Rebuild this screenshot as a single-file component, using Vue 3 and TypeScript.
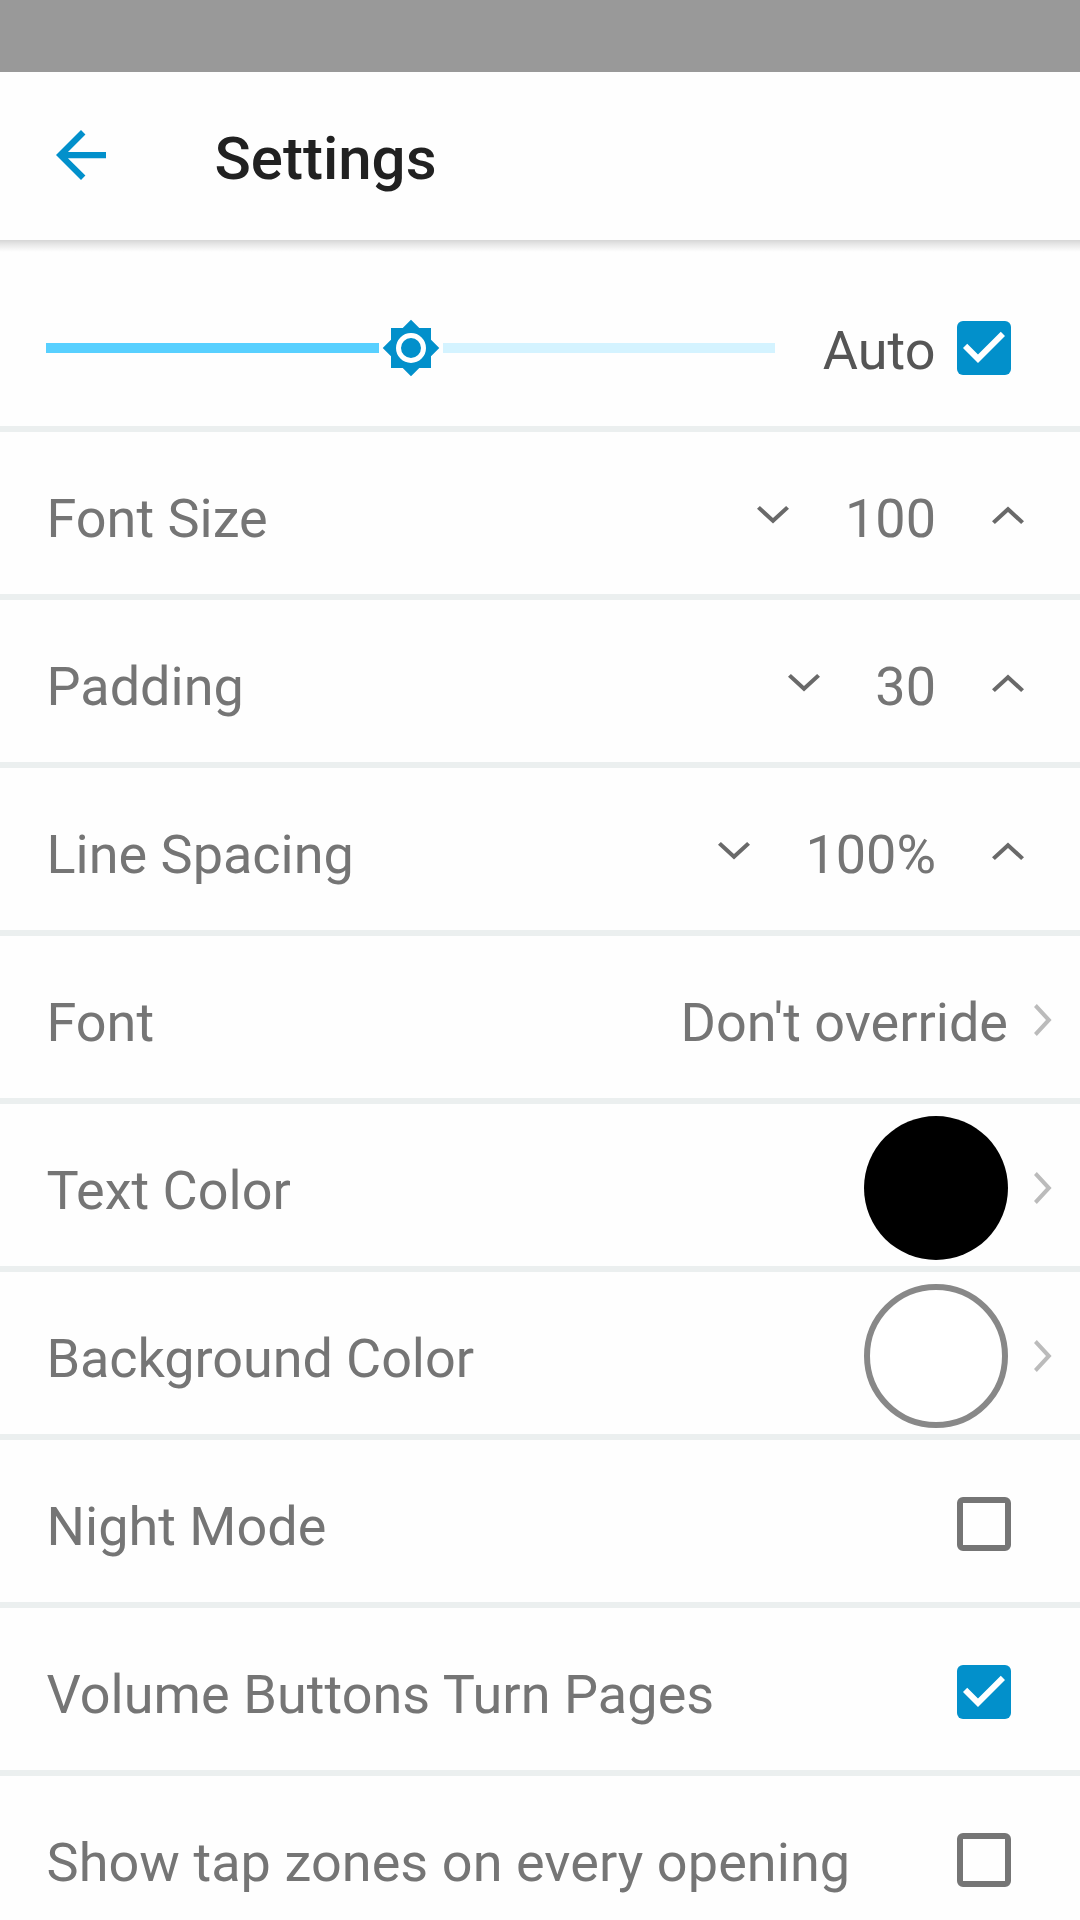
<script setup lang="ts">
import { ref } from 'vue'

type Kind = 'stepper' | 'link' | 'color' | 'check'

interface Row {
  label: string
  kind: Kind
  value?: string
  color?: string
  outlined?: boolean
  checked?: boolean
  tracking?: number
}

const autoBrightness = ref(true)

const rows = ref<Row[]>([
  { label: 'Font Size', kind: 'stepper', value: '100' },
  { label: 'Padding', kind: 'stepper', value: '30' },
  { label: 'Line Spacing', kind: 'stepper', value: '100%' },
  { label: 'Font', kind: 'link', value: "Don't override" },
  { label: 'Text Color', kind: 'color', color: '#000000' },
  { label: 'Background Color', kind: 'color', color: '#ffffff', outlined: true, tracking: -0.08 },
  { label: 'Night Mode', kind: 'check', checked: false },
  { label: 'Volume Buttons Turn Pages', kind: 'check', checked: true, tracking: 0.06 },
  { label: 'Show tap zones on every opening', kind: 'check', checked: false, tracking: 0.07 },
])
</script>

<template>
  <div class="screen">
    <div class="status-bar"></div>
    <header class="app-bar">
      <svg class="back" viewBox="4 4 16 16">
        <path d="M20 11H7.83l5.59-5.59L12 4l-8 8 8 8 1.41-1.41L7.83 13H20v-2z" />
      </svg>
      <h1 class="title">Settings</h1>
    </header>

    <main class="list">
      <section class="brightness">
        <div class="slider">
          <div class="track active"></div>
          <svg class="thumb" viewBox="0 0 24 24">
            <path
              fill="#0290cb"
              d="M20 15.31L23.31 12 20 8.69V4h-4.69L12 .69 8.69 4H4v4.69L.69 12 4 15.31V20h4.69L12 23.31 15.31 20H20v-4.69z"
            />
            <circle cx="12" cy="12" r="5" fill="none" stroke="#fff" stroke-width="2" />
          </svg>
          <div class="track rest"></div>
        </div>
        <span class="text auto">Auto</span>
        <span class="box" :class="{ checked: autoBrightness }" @click="autoBrightness = !autoBrightness">
          <svg v-if="autoBrightness" viewBox="3 3 18 18">
            <path d="M10 17l-5-5 1.41-1.41L10 14.17l7.59-7.59L19 8l-9 9z" />
          </svg>
        </span>
      </section>

      <section v-for="row in rows" :key="row.label" class="row" :class="row.kind">
        <span class="text label" :style="{ letterSpacing: (row.tracking ?? 0) + 'px' }">{{ row.label }}</span>

        <template v-if="row.kind === 'stepper'">
          <svg class="step" viewBox="0 0 32 18">
            <path d="M0 2.8L2.9 0 16 12 29.1 0 32 2.8 16 17.6z" />
          </svg>
          <span class="text value">{{ row.value }}</span>
          <svg class="step" viewBox="0 0 32 18">
            <path d="M0 15.2L2.9 18 16 6 29.1 18 32 15.2 16 .4z" />
          </svg>
        </template>

        <template v-else-if="row.kind === 'check'">
          <span class="box" :class="{ checked: row.checked }" @click="row.checked = !row.checked">
            <svg v-if="row.checked" viewBox="3 3 18 18">
              <path d="M10 17l-5-5 1.41-1.41L10 14.17l7.59-7.59L19 8l-9 9z" />
            </svg>
          </span>
        </template>

        <template v-else>
          <span v-if="row.kind === 'link'" class="text">{{ row.value }}</span>
          <span v-else class="swatch" :class="{ outlined: row.outlined }" :style="{ backgroundColor: row.color }"></span>
          <svg class="more" viewBox="0 0 18 32">
            <path d="M2.8 0L0 2.9 12 16 0 29.1 2.8 32 17.6 16z" />
          </svg>
        </template>
      </section>
    </main>
  </div>
</template>

<style>
body {
  margin: 0;
  overflow: hidden;
}
</style>

<style scoped>
.screen {
  width: 1080px;
  height: 1920px;
  overflow: hidden;
  background: #fefefe;
  font-family: Roboto, sans-serif;
}
.status-bar {
  height: 72px;
  background: #999;
}
.app-bar {
  height: 168px;
  box-sizing: border-box;
  padding-left: 56px;
  display: flex;
  align-items: center;
}
.back {
  width: 50px;
  height: 50px;
  margin-bottom: 2px;
  fill: #0290cb;
}
.title {
  margin: 0 0 0 108.5px;
  padding-top: 5px;
  font-size: 60px;
  line-height: 70px;
  font-weight: 500;
  color: #212121;
}
.list {
  background: linear-gradient(#d6d6d6, #e6e6e6 4px, #f6f6f6 9px, #fefefe 12px) no-repeat top / 100% 12px;
}
.brightness,
.row {
  box-sizing: border-box;
  display: flex;
  align-items: center;
  background: linear-gradient(#ebefef, #ebefef) no-repeat bottom / 100% 6px;
}
.brightness {
  height: 192px;
  padding: 24px 69px 0 46px;
}
.row {
  height: 168px;
  padding-left: 46.5px;
}
.stepper {
  padding-right: 56px;
}
.link,
.color {
  padding-right: 28px;
}
.check {
  padding-right: 69px;
}
.text {
  padding-top: 5px;
  font-size: 54px;
  line-height: 64px;
  color: #757575;
  white-space: nowrap;
}
.label {
  margin-right: auto;
}
.slider {
  width: 728.5px;
  display: flex;
  align-items: center;
}
.track {
  height: 10px;
}
.active {
  width: 333px;
  background: #58d0ff;
}
.rest {
  flex: 1;
  background: #d4f3ff;
}
.thumb {
  width: 60px;
  height: 60px;
  margin: 0 2px;
}
.auto {
  margin-left: auto;
  margin-right: 21.5px;
  color: #555;
}
.box {
  width: 54px;
  height: 54px;
  box-sizing: border-box;
  border: 6px solid #757575;
  border-radius: 6px;
}
.box.checked {
  border: 0;
  background: #0290cb;
}
.box svg {
  display: block;
  width: 54px;
  height: 54px;
  fill: #fff;
}
.step {
  width: 32px;
  height: 18px;
  margin-top: -2px;
  fill: #696969;
}
.value {
  margin: 0 56px 0 55.5px;
}
.swatch {
  width: 144px;
  height: 144px;
  box-sizing: border-box;
  border-radius: 50%;
}
.outlined {
  border: 6px solid #888;
}
.more {
  width: 18px;
  height: 32px;
  margin-left: 26px;
  fill: #bbb;
}
</style>
